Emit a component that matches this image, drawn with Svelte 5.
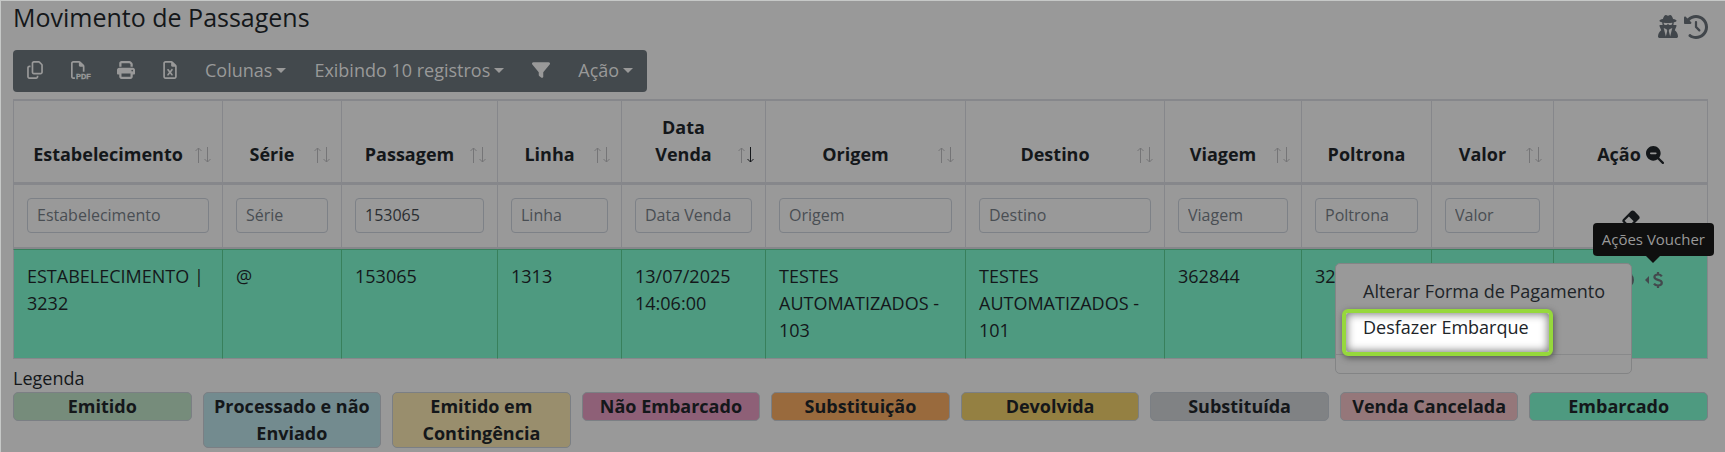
<script>
  const columns = [
    { label: 'Estabelecimento', width: 209, sort: true },
    { label: 'Série', width: 119, sort: true },
    { label: 'Passagem', width: 156, sort: true, value: '153065' },
    { label: 'Linha', width: 124, sort: true },
    { label: 'Data Venda', width: 144, sort: true, sorted: true },
    { label: 'Origem', width: 200, sort: true },
    { label: 'Destino', width: 199, sort: true },
    { label: 'Viagem', width: 137, sort: true },
    { label: 'Poltrona', width: 130 },
    { label: 'Valor', width: 122, sort: true }
  ];
  const actionWidth = 154;
  const total = columns.reduce((sum, c) => sum + c.width, actionWidth);

  const row = [
    'ESTABELECIMENTO | 3232',
    '@',
    '153065',
    '1313',
    '13/07/2025 14:06:00',
    'TESTES AUTOMATIZADOS - 103',
    'TESTES AUTOMATIZADOS - 101',
    '362844',
    '32',
    ''
  ];

  const legend = [
    { label: 'Emitido', color: '#768c7b' },
    { label: 'Processado e não Enviado', color: '#738b8f' },
    { label: 'Emitido em Contingência', color: '#998e6d' },
    { label: 'Não Embarcado', color: '#8e6077' },
    { label: 'Substituição', color: '#996a3d' },
    { label: 'Devolvida', color: '#948042' },
    { label: 'Substituída', color: '#808284' },
    { label: 'Venda Cancelada', color: '#95777a' },
    { label: 'Embarcado', color: '#4e9a80' }
  ];
</script>

<main class="page">
  <header class="heading">
    <h1>Movimento de Passagens</h1>
    <div class="tools">
      <button aria-label="Auditoria">
        <svg width="20" height="23" viewBox="0 0 448 512"><path d="M224 16c-6.7 0-10.8-2.8-15.5-6.1C201.9 5.4 194 0 176 0c-30.5 0-52 43.7-66 89.4C62.7 98.1 32 112.2 32 128c0 14.3 25 27.1 64.6 35.9c-.4 4-.6 8-.6 12.1c0 17 3.3 33.2 9.3 48l-59.9 0C38 224 32 230 32 237.4c0 1.7 .3 3.4 1 5l38.8 96.9C28.2 371.8 0 423.8 0 482.3C0 498.7 13.3 512 29.7 512l388.6 0c16.4 0 29.7-13.3 29.7-29.7c0-58.5-28.2-110.4-71.7-143L415 242.4c.6-1.6 1-3.3 1-5c0-7.4-6-13.4-13.4-13.4l-59.9 0c6-14.8 9.3-31 9.3-48c0-4.1-.2-8.1-.6-12.1C391 155.1 416 142.3 416 128c0-15.8-30.7-29.9-78-38.6C324 43.7 302.5 0 272 0c-18 0-25.9 5.4-32.5 9.9c-4.8 3.3-8.8 6.1-15.5 6.1zm56 208l-12.4 0c-16.5 0-31.1-10.6-36.3-26.2c-2.3-7-12.2-7-14.5 0c-5.2 15.6-19.9 26.2-36.3 26.2L168 224c-22.1 0-40-17.9-40-40l0-14.4c28.2 4.1 61 6.4 96 6.4s67.8-2.3 96-6.4l0 14.4c0 22.1-17.9 40-40 40zm-88 96l16 32L176 480 128 288l64 32zm128-32L272 480 240 352l16-32 64-32z"/></svg>
      </button>
      <button aria-label="Histórico">
        <svg width="24" height="24" viewBox="0 0 512 512"><path d="M75 75L41 41C25.9 25.9 0 36.6 0 57.9L0 168c0 13.3 10.7 24 24 24l110.1 0c21.4 0 32.1-25.9 17-41l-30.8-30.8C155 85.5 203 64 256 64c106 0 192 86 192 192s-86 192-192 192c-40.8 0-78.6-12.7-109.7-34.4c-14.5-10.1-34.4-6.6-44.6 7.9s-6.6 34.4 7.9 44.6C151.2 495 201.7 512 256 512c141.4 0 256-114.6 256-256S397.4 0 256 0C185.3 0 121.3 28.7 75 75zm181 53c-13.3 0-24 10.7-24 24l0 104c0 6.4 2.5 12.5 7 17l72 72c9.4 9.4 24.6 9.4 33.9 0s9.4-24.6 0-33.9l-65-65 0-94.1c0-13.3-10.7-24-24-24z"/></svg>
      </button>
    </div>
  </header>

  <div class="toolbar" role="toolbar" aria-label="Ferramentas da tabela">
    <button aria-label="Copiar">
      <svg width="16" height="18" viewBox="0 0 448 512"><path d="M384 336l-192 0c-8.8 0-16-7.2-16-16l0-256c0-8.8 7.2-16 16-16l140.1 0L400 115.9 400 320c0 8.8-7.2 16-16 16zM192 384l192 0c35.3 0 64-28.7 64-64l0-204.1c0-12.7-5.1-24.9-14.1-33.9L366.1 14.1c-9-9-21.2-14.1-33.9-14.1L192 0c-35.3 0-64 28.7-64 64l0 256c0 35.3 28.7 64 64 64zM64 128c-35.3 0-64 28.7-64 64L0 448c0 35.3 28.7 64 64 64l192 0c35.3 0 64-28.7 64-64l0-32-48 0 0 32c0 8.8-7.2 16-16 16L64 464c-8.8 0-16-7.2-16-16l0-256c0-8.8 7.2-16 16-16l32 0 0-48-32 0z"/></svg>
    </button>
    <button aria-label="Exportar PDF">
      <svg class="pdf" width="18" height="18" viewBox="0 0 512 512"><path d="M64 464l48 0 0 48-48 0c-35.3 0-64-28.7-64-64L0 64C0 28.7 28.7 0 64 0L229.5 0c17 0 33.3 6.7 45.3 18.7l90.5 90.5c12 12 18.7 28.3 18.7 45.3L384 304l-48 0 0-144-80 0c-17.7 0-32-14.3-32-32l0-80L64 48c-8.8 0-16 7.2-16 16l0 384c0 8.8 7.2 16 16 16z"/><text x="144" y="512">PDF</text></svg>
    </button>
    <button aria-label="Imprimir">
      <svg width="18" height="18" viewBox="0 0 512 512"><path d="M128 0C92.7 0 64 28.7 64 64l0 96 64 0 0-96 226.7 0L384 93.3l0 66.7 64 0 0-66.7c0-17-6.7-33.3-18.7-45.3L400 18.7C388 6.7 371.7 0 354.7 0L128 0zM384 352l0 32 0 64-256 0 0-64 0-16 0-16 256 0zm64 32l32 0c17.7 0 32-14.3 32-32l0-96c0-35.3-28.7-64-64-64L64 192c-35.3 0-64 28.7-64 64l0 96c0 17.7 14.3 32 32 32l32 0 0 64c0 35.3 28.7 64 64 64l256 0c35.3 0 64-28.7 64-64l0-64zM432 248a24 24 0 1 1 0 48 24 24 0 1 1 0-48z"/></svg>
    </button>
    <button aria-label="Exportar planilha">
      <svg width="14" height="18" viewBox="0 0 384 512"><path d="M48 448L48 64c0-8.8 7.2-16 16-16l160 0 0 80c0 17.7 14.3 32 32 32l80 0 0 288c0 8.8-7.2 16-16 16L64 464c-8.8 0-16-7.2-16-16zM64 0C28.7 0 0 28.7 0 64L0 448c0 35.3 28.7 64 64 64l256 0c35.3 0 64-28.7 64-64l0-293.5c0-17-6.7-33.3-18.7-45.3L274.7 18.7C262.7 6.7 246.5 0 229.5 0L64 0zm90.9 233.3c-8.1-10.5-23.2-12.3-33.7-4.2s-12.3 23.2-4.2 33.7L161.6 320l-44.5 57.3c-8.1 10.5-6.3 25.5 4.2 33.7s25.5 6.3 33.7-4.2L192 359.1l37.1 47.6c8.1 10.5 23.2 12.3 33.7 4.2s12.3-23.2 4.2-33.7L222.4 320l44.5-57.3c8.1-10.5 6.3-25.5-4.2-33.7s-25.5-6.3-33.7 4.2L192 280.9l-37.1-47.6z"/></svg>
    </button>
    <button class="drop">Colunas</button>
    <button class="drop">Exibindo 10 registros</button>
    <button aria-label="Filtrar">
      <svg width="18" height="18" viewBox="0 0 512 512"><path d="M3.9 54.9C10.5 40.9 24.5 32 40 32l432 0c15.5 0 29.5 8.9 36.1 22.9s4.6 30.5-5.2 42.5L320 320.9 320 448c0 12.1-6.8 23.2-17.7 28.6s-23.8 4.3-33.5-3l-64-48c-8.1-6-12.8-15.5-12.8-25.6l0-79.1L9 97.3C-.7 85.4-2.8 68.8 3.9 54.9z"/></svg>
    </button>
    <button class="drop">Ação</button>
  </div>

  <table>
    <colgroup>
      {#each columns as c}
        <col style:width="{(c.width / total) * 100}%" />
      {/each}
      <col style:width="{(actionWidth / total) * 100}%" />
    </colgroup>
    <thead>
      <tr class="titles">
        {#each columns as c}
          <th class:sortable={c.sort}>
            {c.label}
            {#if c.sort}
              <svg class="sort" width="16" height="16" viewBox="0 0 16 16">
                <path class="arrow" d="M3.5 16V1M.5 4l3-3 3 3" />
                <path class="arrow" class:active={c.sorted} d="M12.5 0v15M9.5 12l3 3 3-3" />
              </svg>
            {/if}
          </th>
        {/each}
        <th>
          <span class="action-title">
            Ação
            <svg width="18" height="18" viewBox="0 0 512 512"><path d="M416 208c0 45.9-14.9 88.3-40 122.7L502.6 457.4c12.5 12.5 12.5 32.8 0 45.3s-32.8 12.5-45.3 0L330.7 376c-34.4 25.2-76.8 40-122.7 40C93.1 416 0 322.9 0 208S93.1 0 208 0S416 93.1 416 208zM136 184c-13.3 0-24 10.7-24 24s10.7 24 24 24l144 0c13.3 0 24-10.7 24-24s-10.7-24-24-24l-144 0z"/></svg>
          </span>
        </th>
      </tr>
      <tr class="filters">
        {#each columns as c}
          <td><input type="text" aria-label={c.label} placeholder={c.label} value={c.value ?? ''} /></td>
        {/each}
        <td>
          <div class="clear">
            <button aria-label="Limpar filtros">
              <svg width="20" height="18" viewBox="0 0 576 512"><path d="M290.7 57.4L57.4 290.7c-25 25-25 65.5 0 90.5l80 80c12 12 28.3 18.7 45.3 18.7L288 480l9.4 0L512 480c17.7 0 32-14.3 32-32s-14.3-32-32-32l-124.1 0L518.6 285.3c25-25 25-65.5 0-90.5L381.3 57.4c-25-25-65.5-25-90.5 0zM297.4 416l-9.4 0-105.4 0-80-80L227.3 211.3 364.7 348.7 297.4 416z"/></svg>
            </button>
          </div>
        </td>
      </tr>
    </thead>
    <tbody>
      <tr>
        {#each row as cell}
          <td>{cell}</td>
        {/each}
        <td class="actions">
          <div class="icons">
            <button aria-label="Detalhes">
              <svg width="16" height="16" viewBox="0 0 16 16"><circle cx="8" cy="8" r="8" /></svg>
            </button>
            <button class="voucher" aria-label="Ações Voucher">
              <svg width="4" height="8" viewBox="0 0 4 8"><path d="M4 0v8L0 4z" /></svg>
              <svg width="10" height="16" viewBox="0 0 10 16"><path class="dollar" d="M5 0v2.5M5 13.5V16M8.8 4.3C8 3 6.7 2.5 5 2.5C3 2.5 1.4 3.5 1.4 5.1C1.4 6.9 3 7.4 5 7.9C7.1 8.4 8.8 9 8.8 10.8C8.8 12.5 7.2 13.5 5 13.5C3.2 13.5 1.8 12.9 1 11.6" /></svg>
            </button>
          </div>
          <div class="tooltip" role="tooltip">Ações Voucher</div>
          <div class="menu">
            <button>Alterar Forma de Pagamento</button>
            <button class="spot"><span>Desfazer Embarque</span></button>
            <hr />
          </div>
        </td>
      </tr>
    </tbody>
  </table>

  <section class="legend">
    <h2>Legenda</h2>
    <ul>
      {#each legend as item}
        <li style:background={item.color}>{item.label}</li>
      {/each}
    </ul>
  </section>
</main>

<style>
  :global(body) {
    background: #999;
  }
  .page,
  .page *,
  .page *::before {
    box-sizing: border-box;
  }
  .page {
    min-height: 100vh;
    padding: 0 17px 0 12px;
    border-top: 1px solid #c6c8c7;
    border-left: 1px solid #c6c8c7;
    color: #14171a;
    font: 18px/27px 'Open Sans', 'Noto Sans', sans-serif;
  }
  button {
    display: inline-flex;
    align-items: center;
    padding: 0;
    border: 0;
    background: none;
    color: inherit;
    font: inherit;
    white-space: nowrap;
  }
  svg {
    display: block;
    fill: currentColor;
  }
  .heading {
    display: flex;
    justify-content: space-between;
    height: 49px;
  }
  h1 {
    margin: 0;
    font-size: 25px;
    font-weight: 400;
    line-height: 32px;
  }
  .tools {
    display: flex;
    gap: 6px;
    align-items: flex-start;
    padding-top: 14px;
    color: #41464b;
  }
  .toolbar {
    display: inline-flex;
    height: 42px;
    border-radius: 4px;
    background: #43494d;
    color: #999;
    vertical-align: top;
  }
  .toolbar button {
    padding: 0 14px 2px;
  }
  .pdf {
    overflow: visible;
  }
  .pdf text {
    font: 700 210px 'Liberation Sans', sans-serif;
    stroke: currentColor;
    stroke-width: 10px;
  }
  .drop::after {
    content: '';
    margin-left: 4px;
    border: 5px solid transparent;
    border-top-color: currentColor;
    border-bottom: 0;
  }
  table {
    width: 100%;
    margin-top: 7px;
    table-layout: fixed;
    border-spacing: 0;
    border-top: 2px solid #86878b;
    border-right: 1px solid #86878b;
  }
  th,
  td {
    position: relative;
    padding: 13px;
    border-left: 1px solid #86878b;
    text-align: left;
    vertical-align: top;
  }
  th {
    padding-bottom: 14px;
    border-bottom: 3px solid #86878b;
    text-align: center;
    vertical-align: bottom;
  }
  th.sortable {
    padding-right: 33px;
  }
  .sort {
    position: absolute;
    right: 11px;
    bottom: 19px;
  }
  .arrow {
    fill: none;
    stroke: #757577;
  }
  .arrow.active {
    stroke: #14171a;
  }
  .action-title {
    display: flex;
    gap: 5px;
    align-items: center;
    justify-content: center;
  }
  .filters td {
    padding-bottom: 14px;
    border-bottom: 2px solid #86878b;
  }
  input {
    display: block;
    width: 100%;
    height: 35px;
    padding: 0 9px 2px;
    border: 1px solid #7d8187;
    border-radius: 4px;
    background: none;
    color: #2a2e32;
    font: 16px 'Open Sans', 'Noto Sans', sans-serif;
  }
  input::placeholder {
    color: #494e53;
    opacity: 1;
  }
  .clear {
    display: flex;
    align-items: flex-end;
    justify-content: center;
    height: 30px;
  }
  .clear button {
    height: 20px;
  }
  tbody td {
    padding-bottom: 14px;
    border-top: 1px solid #38805c;
    border-bottom: 1px solid #86878b;
    border-left-color: #38805c;
    background: #4e9a80;
  }
  tbody td:first-child {
    border-left-color: #86878b;
  }
  .icons {
    display: flex;
    gap: 11px;
    align-items: center;
    justify-content: flex-end;
    height: 34px;
    padding-right: 31px;
    color: #43494d;
  }
  .voucher {
    gap: 4px;
  }
  .dollar {
    fill: none;
    stroke: currentColor;
    stroke-width: 2.2;
  }
  .tooltip {
    position: absolute;
    right: -7px;
    bottom: 102px;
    padding: 3px 9px;
    border-radius: 4px;
    background: #0f0f0f;
    color: #999;
    font-size: 15px;
    white-space: nowrap;
  }
  .tooltip::after {
    content: '';
    position: absolute;
    top: 100%;
    left: 50%;
    margin-left: -7px;
    border: 7px solid transparent;
    border-top-color: #0f0f0f;
    border-bottom: 0;
  }
  .menu {
    position: absolute;
    top: 13px;
    right: 75px;
    width: 297px;
    padding: 9px 0;
    border: 1px solid #838485;
    border-radius: 5px;
    background: #999;
    color: #202428;
  }
  .menu button {
    display: flex;
    width: 100%;
    height: 36px;
    padding: 0 27px;
  }
  .menu hr {
    margin: 9px 0;
    border: 0;
    border-top: 1px solid #88898a;
  }
  .spot {
    position: relative;
  }
  .spot::before {
    content: '';
    position: absolute;
    top: 0;
    left: 6px;
    width: 211px;
    height: 47px;
    border: 4px solid #96d83c;
    border-radius: 6px;
    background: #fff;
    box-shadow:
      inset 0 0 9px 1px #777,
      1px 2px 6px #555;
  }
  .spot span {
    position: relative;
  }
  .legend {
    padding-top: 6px;
  }
  h2 {
    margin: 0;
    font: inherit;
  }
  ul {
    display: grid;
    grid-template-columns: repeat(9, 1fr);
    gap: 11px;
    align-items: start;
    margin: 0;
    padding: 0;
    list-style: none;
  }
  li {
    padding: 0 9px;
    border: 1px solid #7b7f84;
    border-radius: 5px;
    font-weight: 700;
    text-align: center;
  }
</style>
